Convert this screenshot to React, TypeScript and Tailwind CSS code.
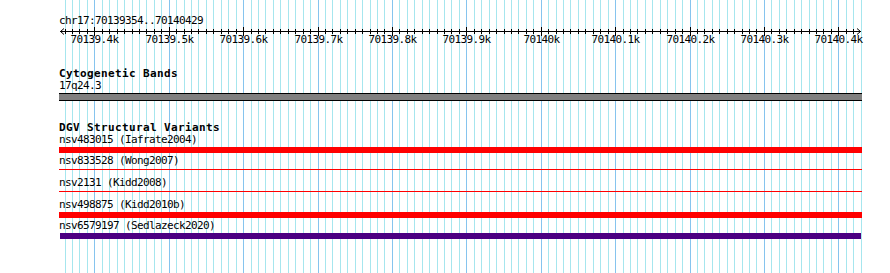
import React from "react";

const START = 70139354;
const X0 = 60.1;
const SCALE = 0.744;
const xOf = (bp: number) => X0 + (bp - START) * SCALE;

const gridBps: number[] = [];
for (let bp = 70139360; bp <= 70140430; bp += 10) gridBps.push(bp);

const majors = [
  { bp: 70139400, label: "70139.4k" },
  { bp: 70139500, label: "70139.5k" },
  { bp: 70139600, label: "70139.6k" },
  { bp: 70139700, label: "70139.7k" },
  { bp: 70139800, label: "70139.8k" },
  { bp: 70139900, label: "70139.9k" },
  { bp: 70140000, label: "70140k" },
  { bp: 70140100, label: "70140.1k" },
  { bp: 70140200, label: "70140.2k" },
  { bp: 70140300, label: "70140.3k" },
  { bp: 70140400, label: "70140.4k" },
];

type Row = { label: string; kind: "thick" | "thin" | "purple" };
const rows: Row[] = [
  { label: "nsv483015 (Iafrate2004)", kind: "thick" },
  { label: "nsv833528 (Wong2007)", kind: "thin" },
  { label: "nsv2131 (Kidd2008)", kind: "thin" },
  { label: "nsv498875 (Kidd2010b)", kind: "thick" },
  { label: "nsv6579197 (Sedlazeck2020)", kind: "purple" },
];

const mono = { fontFamily: '"DejaVu Sans Mono", "Liberation Mono", monospace' };

export default function App() {
  return (
    <div
      className="relative w-[890px] h-[273px] bg-white overflow-hidden text-black"
      style={mono}
    >
      {/* gridlines */}
      <svg className="absolute left-0 top-0" width={890} height={273}>
        {gridBps.map((bp) => {
          const x = Math.round(xOf(bp)) + 0.5;
          if (x > 862) return null;
          const major = bp % 100 === 0;
          return (
            <line
              key={bp}
              x1={x}
              x2={x}
              y1={0}
              y2={273}
              stroke={major ? "#86c4ee" : "#a6e6ee"}
              strokeWidth={1}
            />
          );
        })}
      </svg>

      <div className="relative w-[862px] pl-[59px] pt-[15px]">
        <div className="h-[12px] leading-[12px] text-[11px] tracking-[-0.62px] whitespace-nowrap">
          chr17:70139354..70140429
        </div>

        {/* ruler */}
        <div className="relative h-[20px] -ml-[59px] w-[890px]">
          <svg className="absolute left-0 top-0" width={890} height={10}>
            <line x1={60} x2={861} y1={4.5} y2={4.5} stroke="#000" strokeWidth={1} />
            <polyline points="64,1.5 60.5,4.5 64,7.5" fill="none" stroke="#000" strokeWidth={1} />
            <polyline points="857,1.5 860.5,4.5 857,7.5" fill="none" stroke="#000" strokeWidth={1} />
            {gridBps.map((bp) => {
              const x = Math.round(xOf(bp)) + 0.5;
              if (x > 858) return null;
              const major = bp % 100 === 0;
              return (
                <line
                  key={bp}
                  x1={x}
                  x2={x}
                  y1={major ? 0 : 2}
                  y2={major ? 9 : 7}
                  stroke="#000"
                  strokeWidth={1}
                />
              );
            })}
          </svg>
          {majors.map((m) => (
            <div
              key={m.bp}
              className="absolute top-[7px] h-[12px] leading-[12px] text-[11px] tracking-[-0.62px] whitespace-nowrap -translate-x-1/2"
              style={{ left: Math.round(xOf(m.bp)) + 0.5 }}
            >
              {m.label}
            </div>
          ))}
        </div>

        <div className="mt-[21px] h-[12px] leading-[12px] text-[11px] tracking-[0.38px] font-bold whitespace-nowrap">
          Cytogenetic Bands
        </div>
        <div className="h-[12px] leading-[12px] text-[11px] tracking-[-0.62px] whitespace-nowrap">
          17q24.3
        </div>
        <div className="mt-[1px] h-[8px] w-[803px] border-y border-black bg-[#808080]" />

        <div className="mt-[21px] h-[12px] leading-[12px] text-[11px] tracking-[0.38px] font-bold whitespace-nowrap">
          DGV Structural Variants
        </div>

        <div className="flex flex-col">
          {rows.map((r, i) => (
            <div key={r.label} className={i === 0 ? "" : "mt-[2px]"}>
              <div className="h-[12px] leading-[12px] text-[11px] tracking-[-0.62px] whitespace-nowrap">
                {r.label}
              </div>
              <div className="mt-[1px] h-[6px] w-[803px]">
                {r.kind === "thick" && <div className="h-[6px] w-[803px] bg-[#ff0000]" />}
                {r.kind === "thin" && <div className="mt-[2px] h-[1px] w-[803px] bg-[#ff0000]" />}
                {r.kind === "purple" && <div className="ml-[1px] h-[6px] w-[801px] bg-[#4b0082]" />}
              </div>
            </div>
          ))}
        </div>
      </div>
    </div>
  );
}
